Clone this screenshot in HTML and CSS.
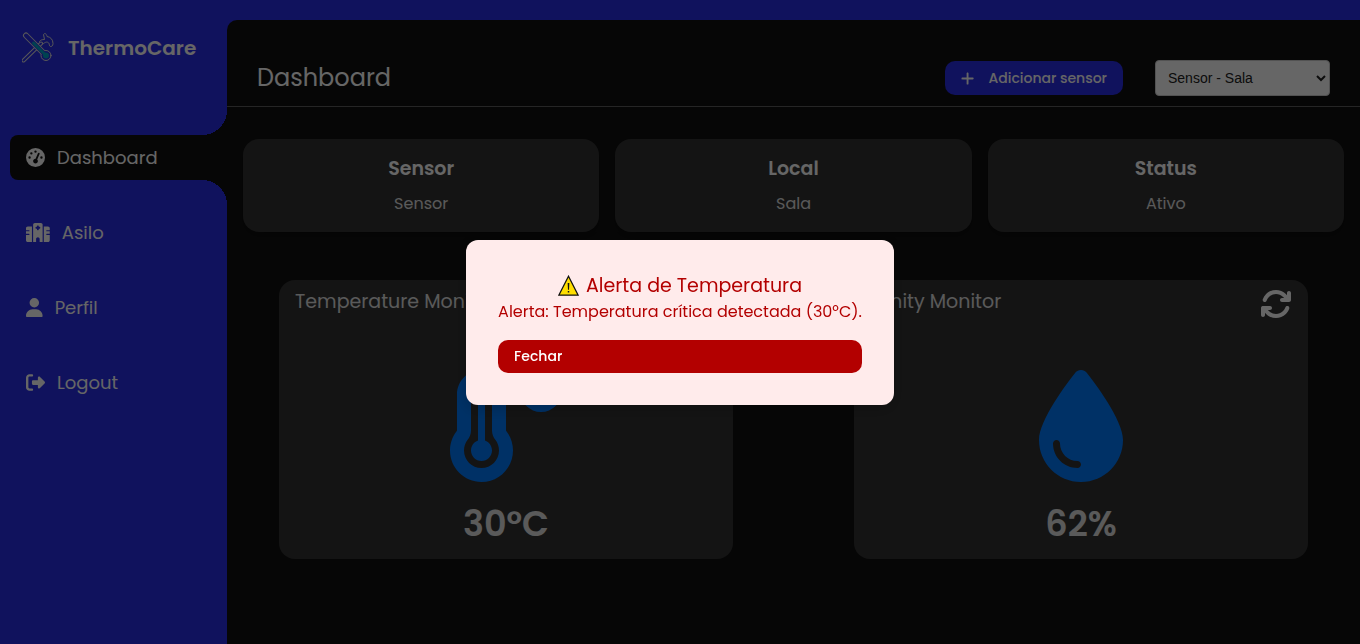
FILE: index.html
```html
<!DOCTYPE html>
<html lang="pt-BR">
<head>
<meta charset="utf-8">
<title>ThermoCare</title>
<link rel="stylesheet" href="styles.css">
</head>
<body>
<div class="app">
  <aside class="sidebar">
    <div class="brand">
      <svg class="brand-logo" viewBox="0 0 32 32" fill="none" stroke-linecap="round" stroke-linejoin="round">
        <path class="cane" d="M18.500 10.500 17.500 9.500C18.500 8 20 7.500 22.500 7.500L21.500 2.500C23 0.500 24.500 2 25 4.500C28.500 5 31 7.500 31 11.500C31 13.500 29.500 15 28.500 14.500C27 14 27.500 12.500 27 11.500C26 9.500 23.500 9.500 21 12"/>
        <path class="cane-edge" d="M1.500 28.500 19 11.500"/>
        <path class="cane-core" d="M1.500 28.500 19 11.500"/>
        <path class="glass" d="M4 3.500 24 23.500"/>
        <circle class="glass-bulb" cx="24" cy="23.500" r="5"/>
        <path class="glass-core" d="M4 3.500 24 23.500"/>
        <path class="mercury" d="M11.500 11 24 23.500"/>
        <circle class="mercury-bulb" cx="24" cy="23.500" r="3"/>
      </svg>
      <span class="brand-name">ThermoCare</span>
    </div>
    <nav class="menu">
      <a class="menu-item active" href="#">
        <svg class="menu-icon" viewBox="0 0 512 512"><path fill-rule="evenodd" d="M0 256a256 256 0 1 1 512 0A256 256 0 1 1 0 256zM288 96a32 32 0 1 0 -64 0 32 32 0 1 0 64 0zM256 416c35.3 0 64-28.7 64-64c0-17.4-6.9-33.1-18.1-44.6L366 161.7c5.3-12.1-.2-26.3-12.3-31.6s-26.3 .2-31.6 12.3L257.9 288c-.6 0-1.3 0-1.9 0c-35.3 0-64 28.7-64 64s28.7 64 64 64zM176 144a32 32 0 1 0 -64 0 32 32 0 1 0 64 0zM96 288a32 32 0 1 0 0-64 32 32 0 1 0 0 64zm352-32a32 32 0 1 0 -64 0 32 32 0 1 0 64 0z"/></svg>
        <span>Dashboard</span>
      </a>
      <a class="menu-item" href="#">
        <svg class="menu-icon" viewBox="0 0 640 512"><path fill-rule="evenodd" d="M192 48c0-26.5 21.5-48 48-48H400c26.5 0 48 21.5 48 48V512H368V432c0-26.5-21.5-48-48-48s-48 21.5-48 48v80H192V48zM48 96H160V512H48c-26.5 0-48-21.5-48-48V320H80c8.8 0 16-7.2 16-16s-7.2-16-16-16H0V224H80c8.8 0 16-7.2 16-16s-7.2-16-16-16H0V144c0-26.5 21.5-48 48-48zm544 0c26.5 0 48 21.5 48 48v48H560c-8.8 0-16 7.2-16 16s7.2 16 16 16h80v64H560c-8.8 0-16 7.2-16 16s7.2 16 16 16h80V464c0 26.5-21.5 48-48 48H480V96H592zM312 64c-8.8 0-16 7.2-16 16v24H272c-8.8 0-16 7.2-16 16v16c0 8.8 7.2 16 16 16h24v24c0 8.8 7.2 16 16 16h16c8.8 0 16-7.2 16-16V152h24c8.8 0 16-7.2 16-16V120c0-8.800-7.200-16-16-16H344V80c0-8.800-7.200-16-16-16H312z"/></svg>
        <span>Asilo</span>
      </a>
      <a class="menu-item" href="#">
        <svg class="menu-icon" viewBox="0 0 448 512"><path d="M224 256A128 128 0 1 0 224 0a128 128 0 1 0 0 256zm-45.7 48C79.8 304 0 383.8 0 482.3C0 498.7 13.3 512 29.7 512H418.3c16.400 0 29.700-13.300 29.700-29.700C448 383.8 368.2 304 269.7 304H178.3z"/></svg>
        <span>Perfil</span>
      </a>
      <a class="menu-item" href="#">
        <svg class="menu-icon" viewBox="0 0 512 512"><path d="M377.9 105.9L500.7 228.7c7.2 7.2 11.3 17.1 11.3 27.3s-4.1 20.1-11.3 27.3L377.9 406.1c-6.4 6.4-15 9.9-24 9.9c-18.7 0-33.9-15.2-33.9-33.9l0-62.1-128 0c-17.7 0-32-14.3-32-32l0-64c0-17.7 14.3-32 32-32l128 0 0-62.1c0-18.7 15.2-33.9 33.9-33.9c9 0 17.6 3.6 24 9.900zM160 96L96 96c-17.7 0-32 14.3-32 32l0 256c0 17.7 14.3 32 32 32l64 0c17.7 0 32 14.3 32 32s-14.3 32-32 32l-64 0c-53 0-96-43-96-96L0 128C0 75 43 32 96 32l64 0c17.7 0 32 14.3 32 32s-14.3 32-32 32z"/></svg>
        <span>Logout</span>
      </a>
    </nav>
  </aside>

  <main class="main">
    <header class="topbar">
      <h1 class="page-title">Dashboard</h1>
      <div class="actions">
        <button class="button add-button" type="button">
          <svg class="plus-icon" viewBox="0 0 448 512"><path d="M256 80c0-17.7-14.3-32-32-32s-32 14.3-32 32V224H48c-17.7 0-32 14.3-32 32s14.3 32 32 32H192V432c0 17.7 14.3 32 32 32s32-14.3 32-32V288H400c17.7 0 32-14.3 32-32s-14.3-32-32-32H256V80z"/></svg>
          <span>Adicionar sensor</span>
        </button>
        <select class="sensor-select" aria-label="Sensor">
          <option>Sensor - Sala</option>
        </select>
      </div>
    </header>

    <section class="summary">
      <article class="info-card"><h2 class="info-title">Sensor</h2><p class="info-text">Sensor</p></article>
      <article class="info-card"><h2 class="info-title">Local</h2><p class="info-text">Sala</p></article>
      <article class="info-card"><h2 class="info-title">Status</h2><p class="info-text">Ativo</p></article>
    </section>

    <section class="monitors">
      <article class="monitor">
        <div class="monitor-head"><h2 class="monitor-title">Temperature Monitor</h2></div>
        <svg class="monitor-icon" viewBox="0 0 512 512"><path transform="translate(-16 0)" fill-rule="evenodd" d="M160 64c-26.5 0-48 21.5-48 48V276.5c0 17.3-7.1 31.9-15.3 42.5C86.2 332.6 80 349.5 80 368c0 44.2 35.8 80 80 80s80-35.8 80-80c0-18.5-6.2-35.4-16.7-48.9c-8.2-10.6-15.3-25.2-15.3-42.5V112c0-26.5-21.5-48-48-48zM48 112C48 50.2 98.1 0 160 0s112 50.1 112 112V276.5c0 .1 .1 .3 .2 .6c.2 .6 .8 1.6 1.7 2.8c18.9 24.4 30.1 55 30.1 88.1c0 79.5-64.5 144-144 144S16 447.5 16 368c0-33.2 11.2-63.8 30.1-88.1c.9-1.2 1.5-2.2 1.7-2.8c.1-.3 .2-.5 .2-.6V112zM208 368c0 26.5-21.5 48-48 48s-48-21.5-48-48c0-20.9 13.4-38.7 32-45.3V112c0-8.8 7.2-16 16-16s16 7.2 16 16V322.7c18.6 6.6 32 24.4 32 45.300z"/><path fill-rule="evenodd" d="M416 64a32 32 0 1 1 0 64 32 32 0 1 1 0-64zm0 128A96 96 0 1 0 416 0a96 96 0 1 0 0 192z"/></svg>
        <p class="monitor-value">30°C</p>
      </article>
      <article class="monitor">
        <div class="monitor-head">
          <h2 class="monitor-title">Umity Monitor</h2>
          <button class="refresh" type="button" aria-label="Atualizar">
            <svg class="refresh-icon" viewBox="0 0 512 512"><path d="M105.1 202.6c7.7-21.8 20.2-42.3 37.8-59.8c62.5-62.5 163.8-62.5 226.3 0L386.3 160 352 160c-17.7 0-32 14.3-32 32s14.3 32 32 32l111.5 0 .4 0c17.7 0 32-14.3 32-32l0-112c0-17.7-14.3-32-32-32s-32 14.3-32 32l0 35.2L414.4 97.6c-87.5-87.5-229.3-87.5-316.8 0C73.2 122 55.6 150.7 44.8 181.4c-5.9 16.7 2.9 34.9 19.5 40.8s34.9-2.9 40.8-19.500zM39 289.3c-5 1.5-9.8 4.2-13.7 8.2c-4 4-6.7 8.8-8.1 14c-.3 1.2-.6 2.5-.8 3.8c-.3 1.7-.4 3.4-.4 5.1L16 432c0 17.7 14.3 32 32 32s32-14.3 32-32l0-35.1 17.6 17.5c87.5 87.4 229.3 87.4 316.7 0c24.4-24.4 42.1-53.1 52.9-83.8c5.9-16.7-2.9-34.9-19.5-40.8s-34.9 2.9-40.8 19.5c-7.7 21.8-20.2 42.3-37.8 59.8c-62.5 62.5-163.8 62.5-226.3 0l-.1-.1L125.6 352l34.4 0c17.7 0 32-14.3 32-32s-14.3-32-32-32L48.4 288c-1.6 0-3.2 .1-4.8 .3s-3.1 .5-4.600 1z"/></svg>
          </button>
        </div>
        <svg class="monitor-icon" viewBox="0 0 384 512"><path fill-rule="evenodd" d="M192 512C86 512 0 426 0 320C0 228.8 130.2 57.7 166.6 11.7C172.6 4.2 181.5 0 191.1 0l1.8 0c9.6 0 18.5 4.2 24.5 11.7C253.8 57.7 384 228.8 384 320c0 106-86 192-192 192zM96 336c0-8.8-7.2-16-16-16s-16 7.2-16 16c0 61.9 50.1 112 112 112c8.8 0 16-7.2 16-16s-7.2-16-16-16c-44.200 0-80-35.800-80-80z"/></svg>
        <p class="monitor-value">62%</p>
      </article>
    </section>
  </main>
</div>

<div class="overlay">
  <div class="alert" role="alertdialog" aria-modal="true" aria-labelledby="alert-title" aria-describedby="alert-text">
    <h2 class="alert-title" id="alert-title">
      <svg class="warning-icon" viewBox="0 0 20 20"><path fill="#ffde00" stroke="#111" stroke-width="1.200" d="M10 1.200 19.200 19.200H0.800z"/><path fill="#111" d="M9.200 7.500h1.600L10.500 14h-1zM9.300 15.200h1.400v1.500H9.300z"/></svg>
      <span>Alerta de Temperatura</span>
    </h2>
    <p class="alert-text" id="alert-text">Alerta: Temperatura crítica detectada (30°C).</p>
    <button class="button alert-button" type="button">Fechar</button>
  </div>
</div>
</body>
</html>
```
FILE: styles.css
```css
:root {
  --blue: #2a2de8;
  --dark: #111;
  --card: #333;
}

* {
  box-sizing: border-box;
  margin: 0;
  padding: 0;
}

body {
  background: var(--blue);
  color: #fff;
  font-family: Poppins, Inter, sans-serif;
  font-size: 16px;
  line-height: 24px;
}

svg {
  display: block;
  fill: currentColor;
  flex-shrink: 0;
}

.app {
  display: flex;
  min-height: 100vh;
}

.sidebar {
  width: 227px;
  flex-shrink: 0;
  padding: 32px 0 0 10px;
}

.brand {
  display: flex;
  align-items: center;
  gap: 14px;
  height: 32px;
  padding-left: 12px;
}

.brand-logo {
  width: 32px;
  height: 32px;
  fill: none;
}

.brand-name {
  font-size: 20px;
  font-weight: 600;
}

.cane { stroke: #ddd; stroke-width: 1; }
.cane-edge { stroke: #ddd; stroke-width: 4; }
.cane-core { stroke: var(--blue); stroke-width: 2; }
.glass { stroke: #ddd; stroke-width: 6; }
.glass-bulb { stroke: #ddd; stroke-width: 1; fill: var(--blue); }
.glass-core { stroke: var(--blue); stroke-width: 4; }
.mercury { stroke: #00a5c8; stroke-width: 3; }
.mercury-bulb { fill: #00a5c8; }

.menu {
  display: flex;
  flex-direction: column;
  gap: 30px;
  margin-top: 71px;
}

.menu-item {
  position: relative;
  display: flex;
  align-items: center;
  gap: 12px;
  height: 45px;
  padding-left: 16px;
  color: #fff;
  font-size: 18px;
  text-decoration: none;
}

.menu-item.active {
  background: var(--dark);
  border-radius: 8px 0 0 8px;
}

.active::before,
.active::after {
  content: "";
  position: absolute;
  right: 0;
  width: 25px;
  height: 25px;
}

.active::before {
  bottom: 100%;
  background: radial-gradient(circle at 0 0, transparent 25px, var(--dark) 25px);
}

.active::after {
  top: 100%;
  background: radial-gradient(circle at 0 100%, transparent 25px, var(--dark) 25px);
}

.menu-icon {
  height: 19px;
}

.main {
  flex: 1;
  margin-top: 20px;
  background: var(--dark);
  border-radius: 10px 0 0 0;
}

.topbar {
  display: flex;
  align-items: flex-end;
  justify-content: space-between;
  height: 87px;
  padding: 0 30px 10px;
  border-bottom: 1px solid #5c5c5c;
}

.page-title {
  font-size: 24px;
  font-weight: 400;
  line-height: 36px;
}

.actions {
  display: flex;
  align-items: center;
  gap: 32px;
}

.button {
  display: flex;
  align-items: center;
  gap: 12px;
  padding: 6px 16px;
  border: 0;
  border-radius: 10px;
  color: #fff;
  font-family: inherit;
  font-size: 14px;
  font-weight: 500;
  line-height: 21px;
}

.add-button {
  gap: 14px;
  line-height: 22px;
  background: var(--blue);
}

.plus-icon {
  height: 15px;
}

.sensor-select {
  width: 175px;
  height: 36px;
  padding: 8px;
  border: 1px solid #ccc;
  border-radius: 4px;
  background: #fff;
  color: #222;
  font: 14px "Liberation Sans", Arial, sans-serif;
}

.summary {
  display: grid;
  grid-template-columns: repeat(3, 1fr);
  gap: 16px;
  padding: 32px 16px 0;
}

.info-card {
  display: flex;
  flex-direction: column;
  gap: 8px;
  padding: 16px;
  border-radius: 16px;
  background: var(--card);
  box-shadow: 0 4px 8px rgba(0, 0, 0, 0.3);
  text-align: center;
}

.info-title {
  font-size: 19px;
  font-weight: 600;
  line-height: 28px;
}

.info-text {
  line-height: 25px;
  opacity: 0.85;
}

.monitors {
  display: grid;
  grid-template-columns: 1fr 1fr;
  gap: 121px;
  padding: 48px 52px;
}

.monitor {
  display: flex;
  flex-direction: column;
  align-items: center;
  padding: 8px 16px;
  border-radius: 16px;
  background: var(--card);
}

.monitor-head {
  display: flex;
  justify-content: space-between;
  width: 100%;
  height: 82px;
}

.monitor-title {
  font-size: 19px;
  font-weight: 400;
  line-height: 28px;
  opacity: 0.85;
}

.refresh {
  align-self: flex-start;
  border: 0;
  background: none;
  color: #fff;
}

.refresh-icon {
  width: 32px;
  height: 32px;
}

.monitor-icon {
  height: 112px;
  color: #007bff;
}

.monitor-value {
  margin-top: 14px;
  font-size: 35px;
  font-weight: 600;
  line-height: 55px;
  opacity: 0.85;
}

.overlay {
  position: fixed;
  inset: 0;
  display: flex;
  align-items: center;
  justify-content: center;
  background: rgba(0, 0, 0, 0.6);
}

.alert {
  padding: 32px;
  border-radius: 12px;
  background: #ffebeb;
  color: #b30000;
  box-shadow: 0 4px 16px rgba(0, 0, 0, 0.2);
}

.alert-title {
  display: flex;
  align-items: center;
  justify-content: center;
  gap: 7px;
  font-size: 19px;
  font-weight: 400;
  line-height: 28px;
}

.warning-icon {
  width: 21px;
  height: 21px;
}

.alert-text {
  margin-bottom: 16px;
}

.alert-button {
  width: 100%;
  background: #b30000;
}
```
